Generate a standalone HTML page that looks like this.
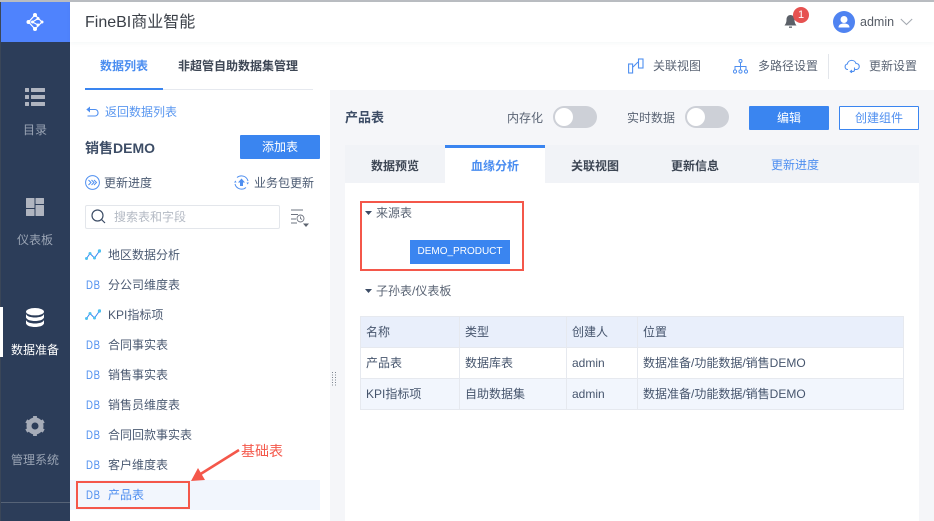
<!DOCTYPE html>
<html lang="zh">
<head>
<meta charset="utf-8">
<style>
html,body{margin:0;padding:0;background:#fff}
body{width:934px;height:521px;overflow:hidden;position:relative;font-family:"Liberation Sans","Noto Sans CJK SC",sans-serif;font-size:12px;color:#3d4d66}
div,span,svg{position:absolute;white-space:nowrap;box-sizing:border-box}
.t{line-height:18px;height:18px}
.nav{left:0;width:70px;text-align:center;color:#9aa4b4;line-height:18px;font-size:12px}
.li{left:108px;color:#4b5a72;line-height:18px}
.db{left:86px;color:#4f8ff0;font-size:12px;line-height:12px;letter-spacing:.8px;transform:scaleX(.8);transform-origin:0 0}
.cell{line-height:30px;height:30px;color:#46556d}
.line{background:#e6e9ef}
</style>
</head>
<body>
<div style="left:0;top:0;width:934px;height:2px;background:#b9bcc1"></div>

<!-- sidebar -->
<div style="left:0;top:2px;width:70px;height:519px;background:#2c3d59"></div>
<div style="left:0;top:2px;width:1px;height:519px;background:#3a4658"></div>
<div style="left:1px;top:2px;width:69px;height:40px;background:#4f83fd"></div>
<svg style="left:24px;top:11px" width="22" height="22" viewBox="0 0 22 22"><g fill="none" stroke="#fff" stroke-width="1.200"><path d="M11 4 4.500 11l6.500 7M11 4l7 7-7 7M8.500 11 14 7.500M8.500 11 14 14"/></g><g fill="#fff"><circle cx="11" cy="4" r="2"/><circle cx="4.500" cy="11" r="2"/><circle cx="11" cy="18" r="2"/><circle cx="8.500" cy="11" r="1.500"/><circle cx="14" cy="7.500" r="1.500"/><circle cx="14" cy="14" r="1.500"/><circle cx="18" cy="11" r="1.500"/></g></svg>

<svg style="left:25px;top:88px" width="20" height="18" viewBox="0 0 20 18"><g fill="#b0b5c0"><rect width="4" height="4" rx=".5"/><rect x="6" width="14" height="4" rx=".5"/><rect y="7" width="4" height="4" rx=".5"/><rect x="6" y="7" width="14" height="4" rx=".5"/><rect y="14" width="4" height="4" rx=".5"/><rect x="6" y="14" width="14" height="4" rx=".5"/></g></svg>
<div class="nav" style="top:121px">目录</div>
<svg style="left:26px;top:198px" width="18" height="18" viewBox="0 0 18 18"><g fill="#b0b5c0"><rect width="8.500" height="10" rx=".5"/><rect x="9.500" width="8.500" height="6" rx=".5"/><rect y="11" width="8.500" height="7" rx=".5"/><rect x="9.500" y="7" width="8.500" height="11" rx=".5"/></g></svg>
<div class="nav" style="top:231px">仪表板</div>
<div style="left:0;top:307px;width:3px;height:50px;background:#fff"></div>
<svg style="left:26px;top:308px" width="18" height="19" viewBox="0 0 18 19"><g fill="#fff"><ellipse cx="9" cy="3.700" rx="9" ry="3.700"/><path d="M0 6c1 2.500 5 3.500 9 3.500S17 8.500 18 6v3.500C17 12 13 13 9 13S1 12 0 9.500Z"/><path d="M0 12c1 2.500 5 3.500 9 3.500s8-1 9-3.500v3.500c-1 2.500-5 3.500-9 3.500s-8-1-9-3.500Z"/></g></svg>
<div class="nav" style="top:341px;color:#fff">数据准备</div>
<svg style="left:25px;top:416px" width="20" height="20" viewBox="0 0 20 20"><circle cx="10" cy="10" r="6" fill="none" stroke="#a6acb8" stroke-width="5"/><path fill="none" stroke="#a6acb8" stroke-width="3.800" d="M10 0v3M10 17v3M1.300 5l2.600 1.500M16.100 13.500l2.600 1.500M1.300 15l2.600-1.500M16.100 6.500 18.700 5"/></svg>
<div class="nav" style="top:451px">管理系统</div>
<div style="left:1px;top:502px;width:69px;height:1px;background:#566377"></div>

<!-- top bar -->
<div style="left:70px;top:2px;width:864px;height:40px;background:#fff;box-shadow:0 2px 4px rgba(40,60,90,.035)"></div>
<div style="left:85px;top:12px;font-size:16px;line-height:22px;color:#3a3f47">FineBI商业智能</div>
<svg style="left:784px;top:15px" width="13" height="14" viewBox="0 0 13 14"><path fill="#5b6068" d="M6.500 0C4 0 2.500 2 2.500 4.500 2.500 8 1.500 9 .5 10.500h12C11.500 9 10.500 8 10.500 4.500 10.500 2 9 0 6.500 0Z"/><rect x="5" y="11.500" width="3" height="1.300" fill="#5b6068"/></svg>
<div style="left:793px;top:7px;width:16px;height:16px;border-radius:50%;background:#e65251;color:#fff;font-size:11px;line-height:16px;text-align:center">1</div>
<svg style="left:833px;top:11px" width="22" height="22" viewBox="0 0 22 22"><circle cx="11" cy="11" r="11" fill="#4f83f1"/><circle cx="11" cy="8.500" r="3.500" fill="#fff"/><path d="M5.500 16.500c0-3 2.500-4 5.500-4s5.500 1 5.500 4Z" fill="#fff"/></svg>
<div style="left:860px;top:13px;line-height:18px;font-size:12.5px;color:#565c66">admin</div>
<svg style="left:900px;top:18px" width="13" height="8" viewBox="0 0 13 8"><path d="M.8 1 6.500 6.500 12.200 1" fill="none" stroke="#a3a8b0" stroke-width="1"/></svg>

<!-- sub tabs -->
<div class="t" style="left:100px;top:57px;color:#4a8df0;font-weight:bold">数据列表</div>
<div class="t" style="left:178px;top:57px;color:#3d4654;font-weight:bold">非超管自助数据集管理</div>
<div style="left:85px;top:89px;width:228px;height:1px;background:#e6e9ef"></div>
<div style="left:85px;top:88px;width:78px;height:2px;background:#3a85f0"></div>

<svg style="left:628px;top:58px" width="16" height="16" viewBox="0 0 16 16"><g fill="none" stroke="#4f8ff0" stroke-width="1.100"><rect x=".6" y="6" width="4" height="9"/><rect x="10.500" y="1" width="4.500" height="9"/><path d="M5 9 10 4"/></g></svg>
<div class="t" style="left:653px;top:57px;color:#5a6474">关联视图</div>
<svg style="left:733px;top:59px" width="15" height="15" viewBox="0 0 15 15"><g fill="none" stroke="#4f8ff0" stroke-width="1"><circle cx="7.500" cy="2" r="1.500"/><circle cx="2" cy="12.500" r="1.600"/><circle cx="7.500" cy="12.500" r="1.600"/><circle cx="13" cy="12.500" r="1.600"/><path d="M7.500 3.500V11M2 11V7.500h11V11"/></g></svg>
<div class="t" style="left:758px;top:57px;color:#5a6474">多路径设置</div>
<div style="left:828px;top:54px;width:1px;height:25px;background:#e3e6eb"></div>
<svg style="left:844px;top:59px" width="16" height="14" viewBox="0 0 16 14"><g fill="none" stroke="#4f8ff0" stroke-width="1.100"><path d="M4 10.500H3.500A2.800 2.800 0 0 1 3.300 5 4.500 4.500 0 0 1 12 4.500a3 3 0 0 1 .5 6H11"/><path d="M10.500 8.500V11a1.500 1.500 0 0 1-1.500 1.500H6.500M8 11 6.300 12.500 8 14"/></g></svg>
<div class="t" style="left:869px;top:57px;color:#5a6474">更新设置</div>

<!-- left panel -->
<svg style="left:86px;top:106px" width="13" height="12" viewBox="0 0 13 12"><g fill="none" stroke="#4f8ff0" stroke-width="1.100"><path d="M1 3.500h8A3 3 0 0 1 12 6.500v0A3 3 0 0 1 9 10H1.500"/></g><path d="M4 .5v6L.3 3.500Z" fill="#4f8ff0"/></svg>
<div class="t" style="left:105px;top:103px;color:#5a97f0">返回数据列表</div>
<div style="left:85px;top:137px;line-height:22px;font-size:14px;font-weight:bold;color:#3d4d66">销售DEMO</div>
<div style="left:240px;top:135px;width:80px;height:24px;background:#3a85f0;border-radius:1px;color:#fff;text-align:center;line-height:24px">添加表</div>

<svg style="left:85px;top:175px" width="15" height="15" viewBox="0 0 15 15"><circle cx="7.500" cy="7.500" r="6.900" fill="none" stroke="#4f8ff0" stroke-width="1"/><path d="M3.500 5l2.500 2.500L3.500 10M6.500 5 9 7.500 6.500 10M9 5l2.500 2.500L9 10" fill="none" stroke="#4f8ff0" stroke-width="1"/></svg>
<div class="t" style="left:104px;top:174px;color:#4b5a72">更新进度</div>
<svg style="left:234px;top:175px" width="15" height="15" viewBox="0 0 15 15"><path d="M3 2.500A6.800 6.800 0 0 1 14 6M12 12.500A6.800 6.800 0 0 1 1 9" fill="none" stroke="#4f8ff0" stroke-width="1"/><path d="M7.500 3.500 11 7.500H9V11H6V7.500H4Z" fill="#4f8ff0"/><path d="M0 7.500l1.500-2 1 2ZM15 7.500l-1.500 2-1-2Z" fill="#4f8ff0"/></svg>
<div class="t" style="left:254px;top:174px;color:#4b5a72">业务包更新</div>

<div style="left:85px;top:205px;width:195px;height:24px;border:1px solid #e3e6eb;border-radius:2px;background:#fff"></div>
<svg style="left:91px;top:209px" width="15" height="15" viewBox="0 0 15 15"><circle cx="6.500" cy="6.500" r="5.500" fill="none" stroke="#3d4d66" stroke-width="1.200"/><path d="M10.500 10.500 14 14" stroke="#3d4d66" stroke-width="1.200"/></svg>
<div class="t" style="left:114px;top:208px;color:#b4bac4">搜索表和字段</div>
<svg style="left:290px;top:209px" width="22" height="20" viewBox="0 0 22 20"><g fill="none" stroke="#6e7480" stroke-width=".9"><path d="M1 1h12M1 5.500h7M1 10h5M1 14h6"/><circle cx="10.500" cy="9.500" r="3.500"/><path d="M10.500 7.500v2l1.500 1"/></g><path d="M13 14.500h6L16 18Z" fill="#5d6470"/></svg>

<svg style="left:85px;top:248px" width="16" height="14" viewBox="0 0 16 14"><path d="M1.500 10.500 5 5.500l4.500 4.500 5-7" fill="none" stroke="#3a85f0" stroke-width="1"/><g fill="#4fc0f0"><circle cx="1.500" cy="10.500" r="1.500"/><circle cx="5" cy="5.500" r="1.500"/><circle cx="9.500" cy="10" r="1.500"/><circle cx="14.500" cy="3" r="1.700"/></g></svg>
<div class="li" style="top:246px">地区数据分析</div>
<div class="db" style="top:279px">DB</div>
<div class="li" style="top:276px">分公司维度表</div>
<svg style="left:85px;top:308px" width="16" height="14" viewBox="0 0 16 14"><path d="M1.500 10.500 5 5.500l4.500 4.500 5-7" fill="none" stroke="#3a85f0" stroke-width="1"/><g fill="#4fc0f0"><circle cx="1.500" cy="10.500" r="1.500"/><circle cx="5" cy="5.500" r="1.500"/><circle cx="9.500" cy="10" r="1.500"/><circle cx="14.500" cy="3" r="1.700"/></g></svg>
<div class="li" style="top:306px">KPI指标项</div>
<div class="db" style="top:339px">DB</div>
<div class="li" style="top:336px">合同事实表</div>
<div class="db" style="top:369px">DB</div>
<div class="li" style="top:366px">销售事实表</div>
<div class="db" style="top:399px">DB</div>
<div class="li" style="top:396px">销售员维度表</div>
<div class="db" style="top:429px">DB</div>
<div class="li" style="top:426px">合同回款事实表</div>
<div class="db" style="top:459px">DB</div>
<div class="li" style="top:456px">客户维度表</div>
<div style="left:70px;top:480px;width:250px;height:30px;background:#f2f6fd"></div>
<div class="db" style="top:489px">DB</div>
<div class="li" style="top:486px;color:#4f8ff0">产品表</div>
<div style="left:76px;top:481px;width:114px;height:28px;border:2px solid #f4574a"></div>
<svg style="left:188px;top:445px" width="54" height="40" viewBox="0 0 54 40"><path d="M51 5 11 30" stroke="#f4574a" stroke-width="2.600"/><path d="M3 36 10 23 17 35Z" fill="#f4574a"/></svg>
<div class="t" style="left:241px;top:442px;font-size:14px;color:#f4574a">基础表</div>

<!-- right panel -->
<div style="left:330px;top:90px;width:604px;height:431px;background:#f5f6f9"></div>
<svg style="left:332px;top:372px" width="6" height="14" viewBox="0 0 6 14"><path d="M0 .5h1M3 .5h1M0 3h1M3 3h1M0 5.500h1M3 5.500h1M0 8h1M3 8h1M0 10.500h1M3 10.500h1M0 13h1M3 13h1" stroke="#7d8590" stroke-width="1"/></svg>
<div style="left:345px;top:108px;line-height:20px;font-size:13px;font-weight:bold;color:#3d4d66">产品表</div>
<div class="t" style="left:507px;top:109px;color:#5a6474">内存化</div>
<div style="left:553px;top:106px;width:44px;height:22px;border-radius:11px;background:#cdd0d7"></div>
<div style="left:555px;top:108px;width:18px;height:18px;border-radius:50%;background:#fff"></div>
<div class="t" style="left:627px;top:109px;color:#5a6474">实时数据</div>
<div style="left:685px;top:106px;width:44px;height:22px;border-radius:11px;background:#cdd0d7"></div>
<div style="left:687px;top:108px;width:18px;height:18px;border-radius:50%;background:#fff"></div>
<div style="left:749px;top:106px;width:80px;height:24px;background:#3a85f0;border-radius:1px;color:#fff;text-align:center;line-height:24px">编辑</div>
<div style="left:839px;top:106px;width:80px;height:24px;border:1px solid #3a85f0;border-radius:1px;background:#fff;color:#4f8ff0;text-align:center;line-height:22px">创建组件</div>

<div style="left:345px;top:145px;width:574px;height:38px;background:#f1f3f7"></div>
<div style="left:345px;top:183px;width:574px;height:338px;background:#fff"></div>
<div style="left:445px;top:145px;width:100px;height:38px;background:#fff;border-top:3px solid #3a85f0"></div>
<div class="t" style="left:371px;top:157px;font-weight:bold;color:#3d4654">数据预览</div>
<div class="t" style="left:471px;top:157px;font-weight:bold;color:#4a8df0">血缘分析</div>
<div class="t" style="left:571px;top:157px;font-weight:bold;color:#3d4654">关联视图</div>
<div class="t" style="left:671px;top:157px;font-weight:bold;color:#3d4654">更新信息</div>
<div class="t" style="left:771px;top:156px;color:#4f8ff0">更新进度</div>

<div style="left:360px;top:201px;width:164px;height:70px;border:2px solid #f4574a"></div>
<svg style="left:365px;top:211px" width="7" height="4" viewBox="0 0 7 4"><path d="M0 0h7L3.500 4Z" fill="#3d4d66"/></svg>
<div class="t" style="left:376px;top:204px;color:#5a6474">来源表</div>
<div style="left:410px;top:240px;width:100px;height:24px;background:#3a85f0;color:#fff;font-size:10px;line-height:24px;text-align:center">DEMO_PRODUCT</div>
<svg style="left:365px;top:289px" width="7" height="4" viewBox="0 0 7 4"><path d="M0 0h7L3.500 4Z" fill="#3d4d66"/></svg>
<div class="t" style="left:376px;top:282px;color:#5a6474">子孙表/仪表板</div>

<!-- table -->
<div style="left:360px;top:316px;width:544px;height:31px;background:#e9effb"></div>
<div style="left:360px;top:378px;width:544px;height:31px;background:#f2f6fd"></div>
<div class="line" style="left:360px;top:316px;width:544px;height:1px"></div>
<div class="line" style="left:360px;top:347px;width:544px;height:1px"></div>
<div class="line" style="left:360px;top:378px;width:544px;height:1px"></div>
<div class="line" style="left:360px;top:409px;width:544px;height:1px"></div>
<div class="line" style="left:360px;top:316px;width:1px;height:94px"></div>
<div class="line" style="left:459px;top:316px;width:1px;height:94px"></div>
<div class="line" style="left:566px;top:316px;width:1px;height:94px"></div>
<div class="line" style="left:637px;top:316px;width:1px;height:94px"></div>
<div class="line" style="left:903px;top:316px;width:1px;height:94px"></div>
<div class="cell" style="left:366px;top:317px">名称</div>
<div class="cell" style="left:465px;top:317px">类型</div>
<div class="cell" style="left:572px;top:317px">创建人</div>
<div class="cell" style="left:643px;top:317px">位置</div>
<div class="cell" style="left:366px;top:348px">产品表</div>
<div class="cell" style="left:465px;top:348px">数据库表</div>
<div class="cell" style="left:572px;top:348px">admin</div>
<div class="cell" style="left:643px;top:348px">数据准备/功能数据/销售DEMO</div>
<div class="cell" style="left:366px;top:379px">KPI指标项</div>
<div class="cell" style="left:465px;top:379px">自助数据集</div>
<div class="cell" style="left:572px;top:379px">admin</div>
<div class="cell" style="left:643px;top:379px">数据准备/功能数据/销售DEMO</div>
</body>
</html>
